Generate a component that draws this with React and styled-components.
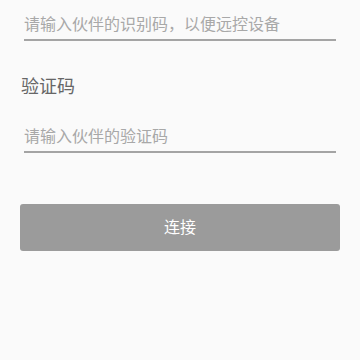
import React from 'react';
import styled, { createGlobalStyle } from 'styled-components';

const GlobalStyle = createGlobalStyle`
  html, body {
    margin: 0;
    padding: 0;
    background: #fafafa;
  }
  body {
    font-family: "Noto Sans CJK SC", "Noto Sans", sans-serif;
  }
`;

const Page = styled.div`
  width: 360px;
  height: 360px;
  box-sizing: border-box;
  padding: 0 20px;
  background: #fafafa;
`;

const Field = styled.input`
  display: block;
  box-sizing: border-box;
  width: 312px;
  height: 41px;
  margin: ${props => props.top || 0}px 4px 0;
  padding: 13px 0 6px;
  border: none;
  border-bottom: 2px solid #a4a4a4;
  background: transparent;
  font-family: inherit;
  font-size: 16px;
  line-height: 20px;
  color: #333;
  outline: none;
  &::placeholder {
    color: #a8a8a8;
  }
`;

const Label = styled.div`
  margin: 32px 0 0 1px;
  font-size: 18px;
  line-height: 24px;
  color: #666666;
`;

const ConnectButton = styled.button`
  display: block;
  width: 320px;
  height: 47px;
  margin-top: 51px;
  padding: 0 0 3px;
  border: none;
  border-radius: 3px;
  background: #9b9b9b;
  color: #ffffff;
  font-family: inherit;
  font-size: 16px;
  cursor: pointer;
`;

export default function App() {
  return (
    <Page>
      <GlobalStyle />
      <Field placeholder="请输入伙伴的识别码，以便远控设备" />
      <Label>验证码</Label>
      <Field top={15} placeholder="请输入伙伴的验证码" />
      <ConnectButton>连接</ConnectButton>
    </Page>
  );
}
